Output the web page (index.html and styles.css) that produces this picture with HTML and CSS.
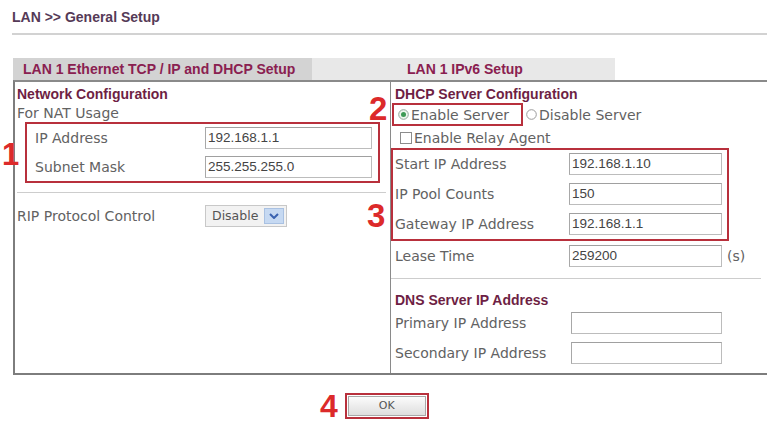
FILE: index.html
```html
<!DOCTYPE html>
<html>
<head>
<meta charset="utf-8">
<title>LAN General Setup</title>
<link rel="stylesheet" href="styles.css">
</head>
<body>
<div class="page">
  <div class="title">LAN &gt;&gt; General Setup</div>
  <div class="rule"></div>
  <div class="tabs">
    <div class="tab tab-active">LAN 1 Ethernet TCP / IP and DHCP Setup</div>
    <div class="tab tab-idle">LAN 1 IPv6 Setup</div>
  </div>
  <div class="panel">
    <span class="mark mark-1">1</span>
    <span class="mark mark-2">2</span>
    <span class="mark mark-3">3</span>
    <div class="col col-left">
      <div class="head">Network Configuration</div>
      <div class="sub">For NAT Usage</div>
      <div class="hl hl-1">
        <div class="row"><span class="lbl lbl-w1">IP Address</span><span class="inp inp-w1">192.168.1.1</span></div>
        <div class="row"><span class="lbl lbl-w1">Subnet Mask</span><span class="inp inp-w1">255.255.255.0</span></div>
      </div>
      <div class="sep sep-left"></div>
      <div class="row row-rip">
        <span class="lbl lbl-rip">RIP Protocol Control</span>
        <span class="select"><span class="select-val">Disable</span><span class="select-btn"><svg width="10" height="6" viewBox="0 0 10 6"><path d="M1 1l4 4 4-4" fill="none" stroke="#3a62b0" stroke-width="2"/></svg></span></span>
      </div>
    </div>
    <div class="col col-right">
      <div class="head">DHCP Server Configuration</div>
      <div class="radios">
        <div class="hl hl-2"><span class="radio"><svg width="11" height="11" viewBox="0 0 11 11"><circle cx="5.5" cy="5.5" r="4.8" fill="#eef6ee" stroke="#8fa89a"/><circle cx="5.5" cy="5.5" r="2.5" fill="#3d9a55"/></svg></span>Enable Server</div>
        <div class="radio-item"><span class="radio"><svg width="11" height="11" viewBox="0 0 11 11"><circle cx="5.5" cy="5.5" r="4.8" fill="#fff" stroke="#9a9a9a"/></svg></span>Disable Server</div>
      </div>
      <div class="check-row"><span class="check"></span>Enable Relay Agent</div>
      <div class="hl hl-3">
        <div class="row"><span class="lbl lbl-w3">Start IP Address</span><span class="inp inp-w3">192.168.1.10</span></div>
        <div class="row"><span class="lbl lbl-w3">IP Pool Counts</span><span class="inp inp-w3">150</span></div>
        <div class="row"><span class="lbl lbl-w3">Gateway IP Address</span><span class="inp inp-w3">192.168.1.1</span></div>
      </div>
      <div class="row row-lease"><span class="lbl lbl-w3">Lease Time</span><span class="inp inp-w3">259200</span><span class="unit">(s)</span></div>
      <div class="sep sep-right"></div>
      <div class="head head-dns">DNS Server IP Address</div>
      <div class="row row-dns1"><span class="lbl lbl-dns">Primary IP Address</span><span class="inp inp-dns"></span></div>
      <div class="row row-dns2"><span class="lbl lbl-dns">Secondary IP Address</span><span class="inp inp-dns"></span></div>
    </div>
  </div>
  <div class="actions">
    <span class="mark-4">4</span>
    <div class="hl hl-4"><span class="btn">OK</span></div>
  </div>
</div>
</body>
</html>
```

FILE: styles.css
```css
html, body {
  margin: 0;
  padding: 0;
  background: #fff;
  overflow: hidden;
}
body {
  font-family: "DejaVu Sans", Verdana, sans-serif;
  font-size: 14px;
  color: #626262;
}
.page {
  padding: 10px 0 0 12px;
}
.title {
  font: bold 14px/14px "Liberation Sans", Arial, sans-serif;
  color: #553a57;
  height: 14px;
}
.rule {
  margin-top: 9px;
  height: 2px;
  width: 760px;
  background: #d2d2d2;
}
.tabs {
  margin-top: 23px;
  margin-left: 1px;
  display: flex;
  height: 22px;
}
.tab {
  box-sizing: border-box;
  font: bold 14px/22px "Liberation Sans", Arial, sans-serif;
  color: #8a2050;
  white-space: nowrap;
}
.tab-active {
  width: 299px;
  padding-left: 10px;
  background: #d3d3d3;
}
.tab-idle {
  width: 303px;
  padding-left: 95px;
  background: #e8e8e8;
}
.panel {
  position: relative;
  box-sizing: border-box;
  margin-left: 1px;
  width: 764px;
  height: 295px;
  border-top: 2px solid #8a8a8a;
  border-left: 2px solid #7d7d7d;
  border-bottom: 2px solid #7d7d7d;
  display: grid;
  grid-template-columns: 376px 1fr;
}
.col-left {
  border-right: 1px solid #8a8a8a;
  padding: 4px 0 0 2px;
}
.col-right {
  padding: 4px 4px 0 4px;
}
.head {
  font: bold 14px/16px "Liberation Sans", Arial, sans-serif;
  color: #6e1f44;
  white-space: nowrap;
}
.sub {
  margin-top: 3px;
  line-height: 16px;
}
.hl {
  box-sizing: border-box;
  border: 2px solid #b8303c;
}
.hl-1 {
  margin-top: 1px;
  margin-left: 8px;
  width: 355px;
  padding: 3px 0 3px 8px;
  display: flex;
  flex-direction: column;
  gap: 7px;
}
.row {
  display: flex;
  align-items: center;
  height: 22px;
}
.lbl {
  white-space: nowrap;
  color: #626262;
}
.lbl-w1 { width: 170px; }
.lbl-rip { width: 188px; }
.lbl-w3 { width: 174px; }
.lbl-dns { width: 176px; }
.inp {
  box-sizing: border-box;
  height: 22px;
  border: 1px solid #bcbcbc;
  border-top-color: #a0a0a0;
  border-left-color: #a8a8a8;
  background: #fff;
  padding-left: 2px;
  font: 13.5px/20px "Liberation Sans", Arial, sans-serif;
  color: #444;
}
.inp-w1 { width: 167px; }
.inp-w3 { width: 153px; }
.inp-dns { width: 151px; }
.sep {
  height: 1px;
  background: #cdcdcd;
}
.sep-left {
  margin-top: 9px;
  width: 369px;
}
.row-rip {
  margin-top: 12px;
}
.select {
  box-sizing: border-box;
  display: flex;
  width: 82px;
  height: 22px;
  border: 1px solid #c8c8c8;
  background: #f2f2f2;
}
.select-val {
  flex: 1;
  padding-left: 6px;
  font-size: 12.5px;
  line-height: 20px;
  color: #555;
}
.select-btn {
  box-sizing: border-box;
  width: 20px;
  margin: 2px 2px 2px 0;
  background: #c6d9f2;
  border: 1px solid #a9c1e2;
  display: flex;
  align-items: center;
  justify-content: center;
}
.radios {
  margin-top: 1px;
  display: flex;
  align-items: center;
  height: 23px;
}
.hl-2 {
  margin-left: -3px;
  width: 131px;
  height: 23px;
  padding: 0 4px;
  display: flex;
  align-items: center;
  white-space: nowrap;
}
.radio {
  display: flex;
  width: 11px;
  height: 11px;
  margin-right: 2px;
}
.radio-item {
  margin-left: 3px;
  display: flex;
  align-items: center;
  white-space: nowrap;
}
.check-row {
  margin-top: 4px;
  margin-left: 5px;
  height: 16px;
  display: flex;
  align-items: center;
  white-space: nowrap;
}
.check {
  box-sizing: border-box;
  width: 12px;
  height: 12px;
  border: 1px solid #8c8c8c;
  background: #fff;
  margin-right: 2px;
}
.hl-3 {
  margin-top: 2px;
  margin-left: -4px;
  width: 338px;
  padding: 3px 0 4px 2px;
  display: flex;
  flex-direction: column;
  gap: 8px;
}
.row-lease {
  margin-top: 4px;
}
.unit {
  margin-left: 5px;
}
.sep-right {
  margin-top: 11px;
  margin-left: -4px;
  width: 370px;
}
.head-dns {
  margin-top: 13px;
}
.row-dns1 {
  margin-top: 4px;
}
.row-dns2 {
  margin-top: 8px;
}
.mark {
  position: absolute;
  font-family: "Liberation Sans", Arial, sans-serif;
  font-weight: bold;
  color: #dc2a2a;
  line-height: 1;
}
.mark-1 {
  font-size: 31px;
  top: 57px;
  left: -13px;
}
.mark-2 {
  font-size: 33px;
  top: 10px;
  left: 354px;
}
.mark-3 {
  font-size: 33px;
  top: 117px;
  left: 352px;
}
.actions {
  margin-top: 18px;
  padding-left: 308px;
  display: flex;
  align-items: center;
}
.mark-4 {
  font: bold 32px/26px "Liberation Sans", Arial, sans-serif;
  color: #dc2a2a;
  margin-right: 7px;
}
.hl-4 {
  width: 84px;
  height: 26px;
  padding: 1px;
}
.btn {
  box-sizing: border-box;
  display: block;
  height: 100%;
  border: 1px solid #a8a8a8;
  background: linear-gradient(#fbfbfb, #dedede);
  font-size: 11px;
  line-height: 18px;
  color: #555;
  text-align: center;
}
```
